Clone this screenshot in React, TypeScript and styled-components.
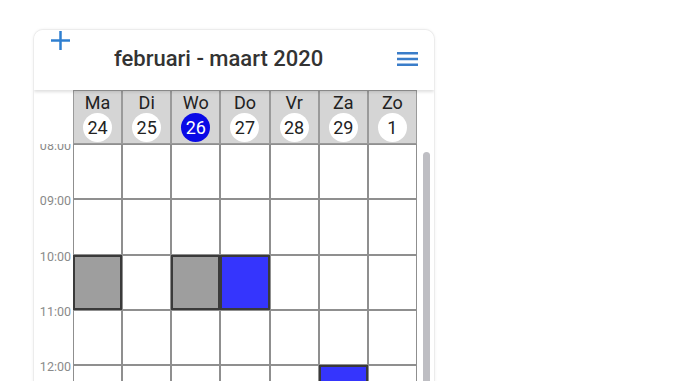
import React from "react";
import styled, { createGlobalStyle } from "styled-components";

const GlobalStyle = createGlobalStyle`
  html, body { margin: 0; padding: 0; background: #ffffff; overflow: hidden; }
  body { font-family: Roboto, "Noto Sans", Arial, sans-serif; }
  * { box-sizing: border-box; }
`;

const Page = styled.div`
  padding: 29px 0 0 33px;
`;

const Card = styled.div`
  width: 402px;
  height: 370px;
  background: #fff;
  border: 1px solid #ececec;
  border-bottom: none;
  border-radius: 10px 10px 0 0;
  box-shadow: 0 0 3px rgba(0, 0, 0, 0.06);
  display: flex;
  flex-direction: column;
  overflow: hidden;
`;

const Header = styled.div`
  position: relative;
  z-index: 2;
  height: 60px;
  flex: none;
  display: flex;
  align-items: center;
  padding: 0 16px 3px 17px;
  background: #fff;
  box-shadow: 0 2px 3px rgba(0, 0, 0, 0.13);
`;

const IconButton = styled.button<{ $top?: boolean }>`
  border: none;
  background: none;
  padding: 0;
  display: flex;
  color: #2f7fd0;
  align-self: ${(p) => (p.$top ? "flex-start" : "center")};
  margin-top: ${(p) => (p.$top ? "1px" : "0")};
`;

const Title = styled.h1`
  margin: 0 0 0 44px;
  font-size: 22px;
  line-height: 26px;
  font-weight: 500;
  color: #333;
`;

const Spacer = styled.div`
  flex: 1;
`;

const DayRow = styled.div`
  flex: none;
  display: grid;
  grid-template-columns: repeat(7, 1fr);
  width: 344px;
  margin-left: 39px;
`;

const DayCell = styled.div`
  height: 54px;
  background: #d5d5d5;
  border: 1px solid #9a9a9a;
  display: flex;
  flex-direction: column;
  align-items: center;
  padding-top: 1px;
`;

const DayName = styled.div`
  font-size: 18px;
  line-height: 21px;
  color: #222;
`;

const DayNum = styled.div<{ $today?: boolean }>`
  width: 29px;
  height: 29px;
  border-radius: 50%;
  background: ${(p) => (p.$today ? "#0a0ae6" : "#ffffff")};
  color: ${(p) => (p.$today ? "#ffffff" : "#222")};
  font-size: 18px;
  line-height: 29px;
  text-align: center;
`;

const Body = styled.div`
  flex: 1;
  display: flex;
  overflow: hidden;
`;

const Gutter = styled.div`
  width: 39px;
  flex: none;
  margin-top: -5px;
`;

const TimeLabel = styled.div`
  height: 55.3px;
  font-size: 12.5px;
  line-height: 14px;
  color: #8a8a8a;
  text-align: right;
  padding-right: 2px;
`;

const Grid = styled.div`
  width: 344px;
  flex: none;
  display: grid;
  grid-template-columns: repeat(7, 1fr);
  grid-auto-rows: 55.3px;
  align-content: start;
`;

const Cell = styled.div<{ $kind?: "gray" | "blue" }>`
  border: ${(p) => (p.$kind ? "2px solid #3a3a3a" : "1px solid #8f8f8f")};
  background: ${(p) =>
    p.$kind === "gray" ? "#9e9e9e" : p.$kind === "blue" ? "#3535fd" : "#ffffff"};
`;

const Track = styled.div`
  width: 17px;
  flex: none;
  padding: 8px 0 0 6px;
`;

const Thumb = styled.div`
  width: 7px;
  height: 400px;
  background: #bebec3;
  border-radius: 4px;
`;

const days = [
  { name: "Ma", num: 24 },
  { name: "Di", num: 25 },
  { name: "Wo", num: 26, today: true },
  { name: "Do", num: 27 },
  { name: "Vr", num: 28 },
  { name: "Za", num: 29 },
  { name: "Zo", num: 1 },
];

const hours = ["08:00", "09:00", "10:00", "11:00", "12:00", "13:00"];

const events: Record<string, "gray" | "blue"> = {
  "2-0": "gray",
  "2-2": "gray",
  "2-3": "blue",
  "4-5": "blue",
};

const PlusIcon = () => (
  <svg width="19" height="19" viewBox="0 0 19 19" fill="none" stroke="currentColor" strokeWidth="2.5">
    <line x1="9.5" y1="0" x2="9.5" y2="19" />
    <line x1="0" y1="9.5" x2="19" y2="9.5" />
  </svg>
);

const MenuIcon = () => (
  <svg width="21" height="14" viewBox="0 0 21 14" fill="none" stroke="#3a7dc9" strokeWidth="2.4">
    <line x1="0" y1="1.3" x2="21" y2="1.3" />
    <line x1="0" y1="7" x2="21" y2="7" />
    <line x1="0" y1="12.7" x2="21" y2="12.7" />
  </svg>
);

export default function App() {
  return (
    <>
      <GlobalStyle />
      <Page>
        <Card>
          <Header>
            <IconButton $top aria-label="toevoegen">
              <PlusIcon />
            </IconButton>
            <Title>februari - maart 2020</Title>
            <Spacer />
            <IconButton aria-label="menu">
              <MenuIcon />
            </IconButton>
          </Header>
          <DayRow>
            {days.map((d) => (
              <DayCell key={d.name}>
                <DayName>{d.name}</DayName>
                <DayNum $today={d.today}>{d.num}</DayNum>
              </DayCell>
            ))}
          </DayRow>
          <Body>
            <Gutter>
              {hours.map((h) => (
                <TimeLabel key={h}>{h}</TimeLabel>
              ))}
            </Gutter>
            <Grid>
              {hours.map((h, r) =>
                days.map((d, c) => <Cell key={`${r}-${c}`} $kind={events[`${r}-${c}`]} />)
              )}
            </Grid>
            <Track>
              <Thumb />
            </Track>
          </Body>
        </Card>
      </Page>
    </>
  );
}
